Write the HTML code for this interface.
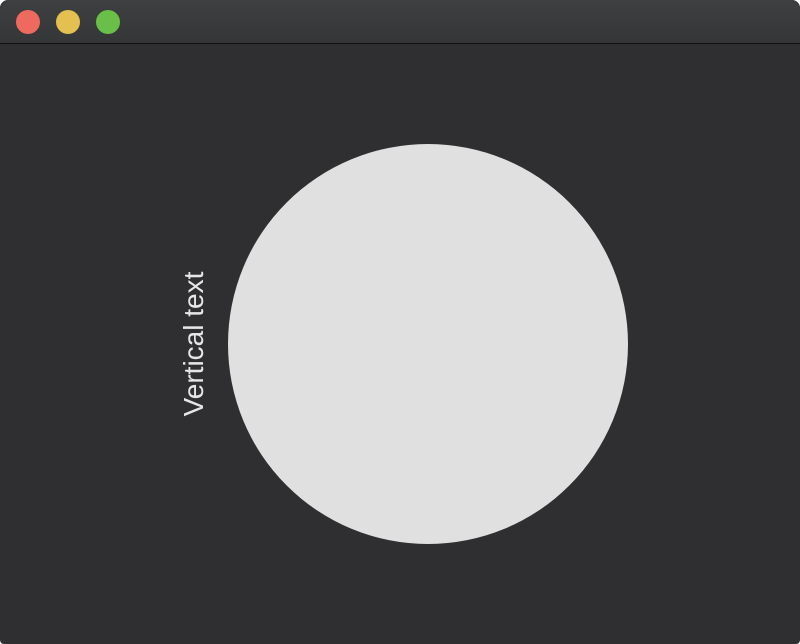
<!DOCTYPE html>
<html><head><style>
html,body{margin:0;padding:0;background:transparent;}
.win{position:absolute;left:0;top:0;width:800px;height:644px;background:#2f2f31;border-radius:8px 8px 4px 4px;overflow:hidden;}
.tb{position:absolute;left:0;top:0;width:800px;height:43px;background:linear-gradient(#3e3f41,#353638);border-bottom:1px solid #111;}
.d{position:absolute;top:10px;width:24px;height:24px;border-radius:50%;}
.c{position:absolute;left:228px;top:144px;width:400px;height:400px;border-radius:50%;background:#e0e0e0;}
.t{position:absolute;left:194px;top:344px;transform:translate(-50%,-50%) rotate(-90deg);color:#e6e6e6;font:28px "Liberation Sans",sans-serif;white-space:nowrap;}
</style></head><body>
<div class="win">
<div class="tb">
<div class="d" style="left:16px;background:#ee6a5f"></div>
<div class="d" style="left:56px;background:#e3c04f"></div>
<div class="d" style="left:96px;background:#6abf48"></div>
</div>
<div class="c"></div>
<div class="t">Vertical text</div>
</div>
</body></html>
